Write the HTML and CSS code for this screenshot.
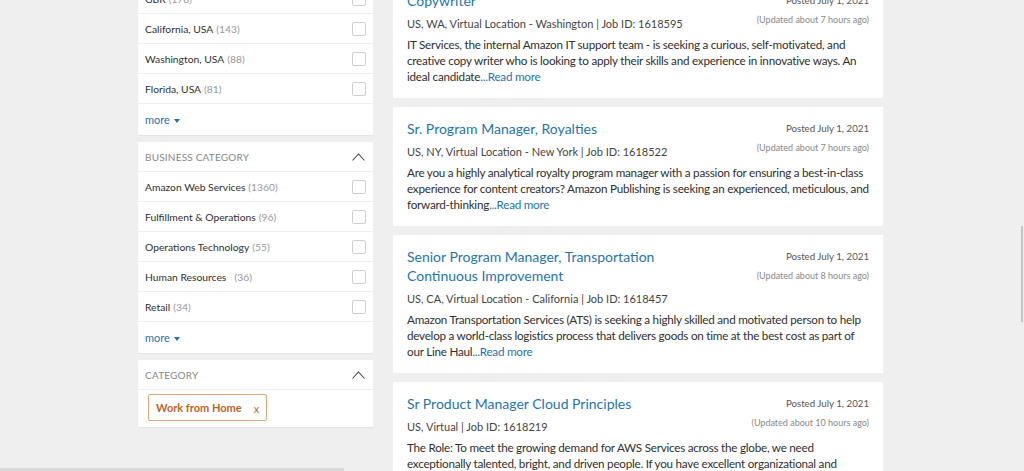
FILE: index.html
```html
<!DOCTYPE html>
<html lang="en">
<head>
  <meta charset="UTF-8" />
  <meta name="viewport" content="width=device-width, initial-scale=1.0"/>
  <title>Amazon Jobs - Search</title>
  <link rel="stylesheet" href="styles.css">
</head>
<body>
  <div class="page">
    <aside class="filters">
      <div class="panel">
        <label class="row">Virginia, USA <span class="count">(201)</span><span class="box"></span></label>
        <label class="row">GBR <span class="count">(178)</span><span class="box"></span></label>
        <label class="row">California, USA <span class="count">(143)</span><span class="box"></span></label>
        <label class="row">Washington, USA <span class="count">(88)</span><span class="box"></span></label>
        <label class="row">Florida, USA <span class="count">(81)</span><span class="box"></span></label>
        <a class="more" href="#">more <span class="caret"></span></a>
      </div>

      <div class="panel">
        <div class="panel-head">
          Business Category
          <svg class="chev" width="13" height="8" viewBox="0 0 13 8"><polyline points="0.5,7.5 6.5,1 12.5,7.5" fill="none" stroke="#444" stroke-width="1.1"/></svg>
        </div>
        <label class="row">Amazon Web Services <span class="count">(1360)</span><span class="box"></span></label>
        <label class="row">Fulfillment &amp; Operations <span class="count">(96)</span><span class="box"></span></label>
        <label class="row">Operations Technology <span class="count">(55)</span><span class="box"></span></label>
        <label class="row">Human Resources &nbsp;<span class="count">(36)</span><span class="box"></span></label>
        <label class="row">Retail <span class="count">(34)</span><span class="box"></span></label>
        <a class="more" href="#">more <span class="caret"></span></a>
      </div>

      <div class="panel">
        <div class="panel-head">
          Category
          <svg class="chev" width="13" height="8" viewBox="0 0 13 8"><polyline points="0.5,7.5 6.5,1 12.5,7.5" fill="none" stroke="#444" stroke-width="1.1"/></svg>
        </div>
        <div class="tags">
          <span class="tag">Work from Home <span class="x">x</span></span>
        </div>
      </div>
    </aside>

    <main class="jobs">
      <div class="job">
        <div class="job-main">
          <a class="job-title" href="#">Copywriter</a>
          <div class="loc">US, WA, Virtual Location - Washington | Job ID: 1618595</div>
        </div>
        <div class="job-side">
          <div class="posted">Posted July 1, 2021</div>
          <div class="updated">(Updated about 7 hours ago)</div>
        </div>
        <p class="desc">IT Services, the internal Amazon IT support team - is seeking a curious, self-motivated, and creative copy writer who is looking to apply their skills and experience in innovative ways. An ideal candidate<a href="#">...Read more</a></p>
      </div>

      <div class="job">
        <div class="job-main">
          <a class="job-title" href="#">Sr. Program Manager, Royalties</a>
          <div class="loc">US, NY, Virtual Location - New York | Job ID: 1618522</div>
        </div>
        <div class="job-side">
          <div class="posted">Posted July 1, 2021</div>
          <div class="updated">(Updated about 7 hours ago)</div>
        </div>
        <p class="desc">Are you a highly analytical royalty program manager with a passion for ensuring a best-in-class experience for content creators? Amazon Publishing is seeking an experienced, meticulous, and forward-thinking<a href="#">...Read more</a></p>
      </div>

      <div class="job">
        <div class="job-main">
          <a class="job-title" href="#">Senior Program Manager, Transportation Continuous Improvement</a>
          <div class="loc">US, CA, Virtual Location - California | Job ID: 1618457</div>
        </div>
        <div class="job-side">
          <div class="posted">Posted July 1, 2021</div>
          <div class="updated">(Updated about 8 hours ago)</div>
        </div>
        <p class="desc">Amazon Transportation Services (ATS) is seeking a highly skilled and motivated person to help develop a world-class logistics process that delivers goods on time at the best cost as part of our Line Haul<a href="#">...Read more</a></p>
      </div>

      <div class="job">
        <div class="job-main">
          <a class="job-title" href="#">Sr Product Manager Cloud Principles</a>
          <div class="loc">US, Virtual | Job ID: 1618219</div>
        </div>
        <div class="job-side">
          <div class="posted">Posted July 1, 2021</div>
          <div class="updated">(Updated about 10 hours ago)</div>
        </div>
        <p class="desc">The Role: To meet the growing demand for AWS Services across the globe, we need exceptionally talented, bright, and driven people. If you have excellent organizational and analytical skills and enjoy working in a fast-paced environment, read on.<a href="#">...Read more</a></p>
      </div>
    </main>
  </div>

  <div class="vscroll"></div>
  <div class="hscroll"></div>
</body>
</html>
```

FILE: styles.css
```css
:root {
  --bg: #efeff0;
  --card: #ffffff;
  --line: #efefef;
  --text: #2f2f2f;
  --muted: #999999;
  --link: #1f74b0;
  --tag: #b8652a;
}

body {
  margin: 0;
  padding-right: 3px;
  height: 471px;
  overflow: hidden;
  background-color: var(--bg);
  font-family: Lato, "Liberation Sans", sans-serif;
  color: var(--text);
}

.page {
  display: flex;
  gap: 20px;
  width: 745px;
  margin: -46px auto 0;
  align-items: flex-start;
}

/* sidebar */

.filters {
  width: 235px;
  flex: none;
  display: flex;
  flex-direction: column;
  gap: 7px;
}

.panel {
  background: var(--card);
  box-shadow: 0 1px 1px rgba(0,0,0,0.04);
}

.panel-head {
  height: 29px;
  display: flex;
  align-items: center;
  justify-content: space-between;
  padding: 0 7px;
  border-bottom: 1px solid var(--line);
  font-size: 10px;
  text-transform: uppercase;
  letter-spacing: 0.2px;
  color: #888;
}

.chev { margin-right: 1px; }

.row {
  height: 29px;
  display: flex;
  align-items: center;
  padding: 0 7px;
  border-bottom: 1px solid var(--line);
  font-size: 10.3px;
  color: var(--text);
}

.count {
  color: var(--muted);
  margin-left: 3px;
}

.box {
  margin-left: auto;
  width: 12px;
  height: 12px;
  border: 1px solid #cfcfcf;
  border-radius: 2px;
}

.more {
  display: flex;
  align-items: center;
  gap: 4px;
  height: 31px;
  padding: 0 7px;
  font-size: 11px;
  color: var(--link);
  text-decoration: none;
}

.caret {
  width: 0;
  height: 0;
  border-left: 3.5px solid transparent;
  border-right: 3.5px solid transparent;
  border-top: 4px solid var(--link);
  margin-top: 2px;
}

.tags {
  padding: 4px 10px 6px;
}

.tag {
  display: inline-flex;
  align-items: center;
  gap: 12px;
  height: 25px;
  padding: 0 7px;
  border: 1px solid #e3a676;
  border-radius: 2px;
  font-size: 11px;
  font-weight: bold;
  color: var(--tag);
}

.tag .x {
  font-weight: normal;
  color: #b8652a;
  margin-top: 2px;
}

/* job list */

.jobs {
  flex: 1;
  display: flex;
  flex-direction: column;
  gap: 9px;
  padding-top: 25px;
}

.job {
  background: var(--card);
  padding: 12px 14px 14px;
  display: grid;
  grid-template-columns: 1fr auto;
  column-gap: 20px;
}

.job-title {
  display: block;
  font-size: 14px;
  line-height: 19px;
  color: var(--link);
  text-decoration: none;
  max-width: 280px;
}

.loc {
  margin-top: 6px;
  font-size: 11px;
  line-height: 16px;
  color: #444;
}

.job-side {
  text-align: right;
  padding-top: 3px;
}

.posted {
  font-size: 9.7px;
  line-height: 13px;
  color: #555;
}

.updated {
  margin-top: 7px;
  font-size: 9px;
  line-height: 12px;
  color: #888;
}

.desc {
  grid-column: 1 / -1;
  margin: 4px 0 0;
  font-size: 11.7px;
  letter-spacing: -0.25px;
  line-height: 16px;
  color: var(--text);
}

.desc a {
  color: var(--link);
  text-decoration: none;
}

/* scroll bars showing in the capture */

.vscroll {
  position: absolute;
  top: 226px;
  right: 1px;
  width: 2px;
  height: 96px;
  background: #c4c4c4;
}

.hscroll {
  position: absolute;
  left: 0;
  bottom: 0;
  width: 344px;
  height: 3px;
  background: #d9d9d9;
}
```
